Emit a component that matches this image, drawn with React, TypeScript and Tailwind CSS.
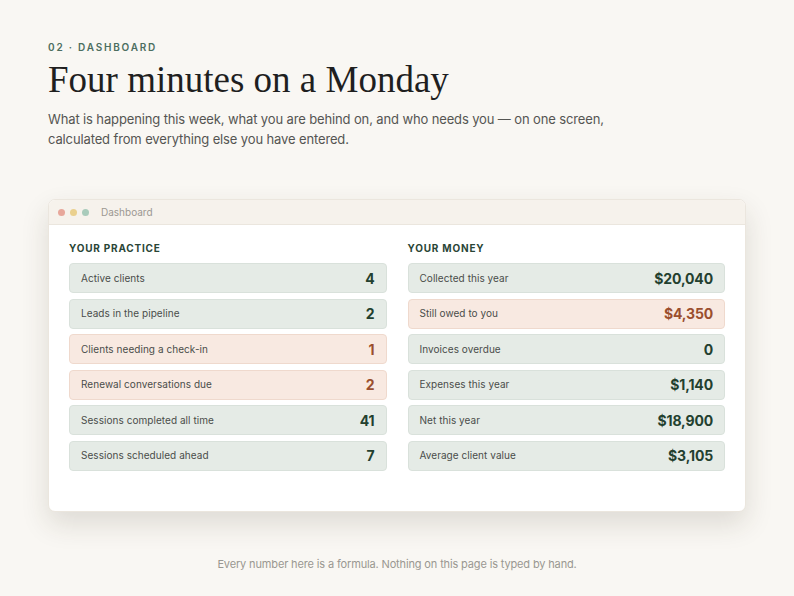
import React from "react";

type Row = { label: string; value: string; warn?: boolean };

const practice: Row[] = [
  { label: "Active clients", value: "4" },
  { label: "Leads in the pipeline", value: "2" },
  { label: "Clients needing a check-in", value: "1", warn: true },
  { label: "Renewal conversations due", value: "2", warn: true },
  { label: "Sessions completed all time", value: "41" },
  { label: "Sessions scheduled ahead", value: "7" },
];

const money: Row[] = [
  { label: "Collected this year", value: "$20,040" },
  { label: "Still owed to you", value: "$4,350", warn: true },
  { label: "Invoices overdue", value: "0" },
  { label: "Expenses this year", value: "$1,140" },
  { label: "Net this year", value: "$18,900" },
  { label: "Average client value", value: "$3,105" },
];

function StatRow({ row }: { row: Row }) {
  return (
    <div
      className={
        row.warn
          ? "flex h-[30px] items-center justify-between rounded-[4px] border border-[#efd9cd] bg-[#f8e9e1] pl-[11px] pr-[11px]"
          : "flex h-[30px] items-center justify-between rounded-[4px] border border-[#d9e1db] bg-[#e5ebe6] pl-[11px] pr-[11px]"
      }
    >
      <span className="text-[10px] tracking-[0.005em] text-[#4a4d4a]">{row.label}</span>
      <span
        className={
          row.warn
            ? "text-[14px] font-bold tracking-[-0.01em] text-[#9b4f2e]"
            : "text-[14px] font-bold tracking-[-0.01em] text-[#23402f]"
        }
      >
        {row.value}
      </span>
    </div>
  );
}

function Column({ title, rows }: { title: string; rows: Row[] }) {
  return (
    <div className="flex flex-col">
      <div className="mb-[7px] text-[10px] font-bold tracking-[0.08em] text-[#2a4536]">{title}</div>
      <div className="flex flex-col gap-[5.6px]">
        {rows.map((r) => (
          <StatRow key={r.label} row={r} />
        ))}
      </div>
    </div>
  );
}

export default function App() {
  return (
    <div
      className="min-h-[596px] w-full bg-[#f9f7f3] px-[48px] pt-[40px]"
      style={{ fontFamily: "Inter, 'Noto Sans', sans-serif" }}
    >
      <div className="text-[10px] font-semibold tracking-[0.18em] text-[#4c6e60]">02 · DASHBOARD</div>
      <h1
        className="mt-[2px] text-[37px] leading-[46px] text-[#1f1f1f]"
        style={{ fontFamily: "'Liberation Serif', 'DejaVu Serif', serif" }}
      >
        Four minutes on a Monday
      </h1>
      <p className="mt-[6px] w-[600px] text-[13px] leading-[20px] tracking-[-0.01em] text-[#555552]">
        What is happening this week, what you are behind on, and who needs you — on one screen,
        calculated from everything else you have entered.
      </p>

      <div className="mt-[50px] overflow-hidden rounded-[7px] border border-[#ebe6de] bg-white shadow-[0_12px_28px_rgba(60,50,30,0.14)]">
        <div className="flex h-[25px] items-center gap-[5px] border-b border-[#ebe6de] bg-[#f6f2ec] pl-[9px]">
          <span className="h-[7px] w-[7px] rounded-full bg-[#e7a79b]" />
          <span className="h-[7px] w-[7px] rounded-full bg-[#ead08e]" />
          <span className="h-[7px] w-[7px] rounded-full bg-[#a9cbbb]" />
          <span className="ml-[7px] text-[10px] text-[#9c9892]">Dashboard</span>
        </div>
        <div className="grid grid-cols-2 gap-[21px] px-[20px] pb-[40px] pt-[16px]">
          <Column title="YOUR PRACTICE" rows={practice} />
          <Column title="YOUR MONEY" rows={money} />
        </div>
      </div>

      <div className="mt-[44px] text-center text-[11px] tracking-[-0.013em] text-[#9a9791]">
        Every number here is a formula. Nothing on this page is typed by hand.
      </div>
    </div>
  );
}
